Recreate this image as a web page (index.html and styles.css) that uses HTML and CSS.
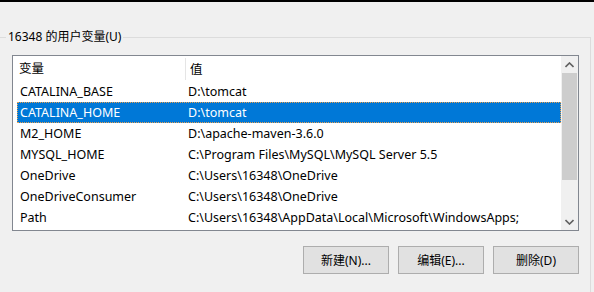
FILE: index.html
```html
<!DOCTYPE html>
<html lang="zh-CN">
<head>
    <meta charset="UTF-8">
    <title>环境变量</title>
    <link rel="stylesheet" href="styles.css">
</head>
<body>
    <div class="topbar"></div>
    <fieldset class="group">
        <legend>16348 的用户变量(U)</legend>
        <div class="listbox">
            <div class="list-main">
                <div class="list-head">
                    <div class="col col-name">变量</div>
                    <div class="col col-value">值</div>
                </div>
                <div class="row"><div class="col col-name">CATALINA_BASE</div><div class="col col-value">D:\tomcat</div></div>
                <div class="row selected"><div class="col col-name">CATALINA_HOME</div><div class="col col-value">D:\tomcat</div></div>
                <div class="row"><div class="col col-name">M2_HOME</div><div class="col col-value">D:\apache-maven-3.6.0</div></div>
                <div class="row"><div class="col col-name">MYSQL_HOME</div><div class="col col-value">C:\Program Files\MySQL\MySQL Server 5.5</div></div>
                <div class="row"><div class="col col-name">OneDrive</div><div class="col col-value">C:\Users\16348\OneDrive</div></div>
                <div class="row"><div class="col col-name">OneDriveConsumer</div><div class="col col-value">C:\Users\16348\OneDrive</div></div>
                <div class="row"><div class="col col-name">Path</div><div class="col col-value">C:\Users\16348\AppData\Local\Microsoft\WindowsApps;</div></div>
            </div>
            <div class="scrollbar">
                <div class="arrow">
                    <svg width="9" height="6" viewBox="0 0 9 6"><path d="M0.5 5 L4.5 1 L8.5 5" fill="none" stroke="#606060" stroke-width="1.6"/></svg>
                </div>
                <div class="thumb"></div>
                <div class="track"></div>
                <div class="arrow">
                    <svg width="9" height="6" viewBox="0 0 9 6"><path d="M0.5 1 L4.5 5 L8.5 1" fill="none" stroke="#606060" stroke-width="1.6"/></svg>
                </div>
            </div>
        </div>
        <div class="buttons">
            <button type="button" class="btn">新建(N)...</button>
            <button type="button" class="btn">编辑(E)...</button>
            <button type="button" class="btn">删除(D)</button>
        </div>
    </fieldset>
</body>
</html>
```

FILE: styles.css
```css
body {
    margin: 0;
    background-color: #f0f0f0;
    font-family: "Noto Sans", "Noto Sans CJK SC", sans-serif;
    font-size: 12.5px;
    color: #000;
    overflow: hidden;
}
.topbar {
    height: 2px;
    background: #000;
}
.group {
    margin: 27px 3px 0 -3px;
    padding: 10px 11px 20px 14px;
    border: 1px solid #dcdcdc;
}
.group legend {
    padding: 0 2px;
    margin-left: -6px;
    line-height: 16px;
    font-size: 12px;
}
.listbox {
    display: flex;
    height: 174px;
    border: 1px solid #828790;
    background: #fff;
}
.list-main {
    flex: 1;
}
.list-head {
    display: flex;
    height: 25px;
    align-items: center;
    margin-left: 4px;
}
.list-head .col-name {
    border-right: 1px solid #e5e5e5;
    height: 22px;
    line-height: 22px;
}
.row {
    display: flex;
    height: 21px;
    align-items: center;
    margin-left: 4px;
    border: 1px solid transparent;
    box-sizing: border-box;
}
.row.selected {
    background: #0078d7;
    color: #fff;
    border: 1px dotted #e8a050;
}
.col {
    padding-left: 2px;
    white-space: nowrap;
}
.col-name {
    width: 166px;
}
.list-head .col-value {
    padding-left: 4px;
}
.row .col-value {
    padding-left: 2px;
}
.scrollbar {
    width: 17px;
    display: flex;
    flex-direction: column;
    background: #f0f0f0;
}
.arrow {
    height: 17px;
    display: flex;
    align-items: center;
    justify-content: center;
}
.thumb {
    height: 107px;
    margin: 0 1px;
    background: #cdcdcd;
}
.track {
    flex: 1;
}
.buttons {
    display: flex;
    justify-content: flex-end;
    gap: 9px;
    margin-top: 15px;
}
.btn {
    width: 86px;
    height: 28px;
    background: #e1e1e1;
    border: 1px solid #adadad;
    font-family: "Noto Sans", "Noto Sans CJK SC", sans-serif;
    font-size: 12px;
    color: #000;
    padding: 0;
}
```
